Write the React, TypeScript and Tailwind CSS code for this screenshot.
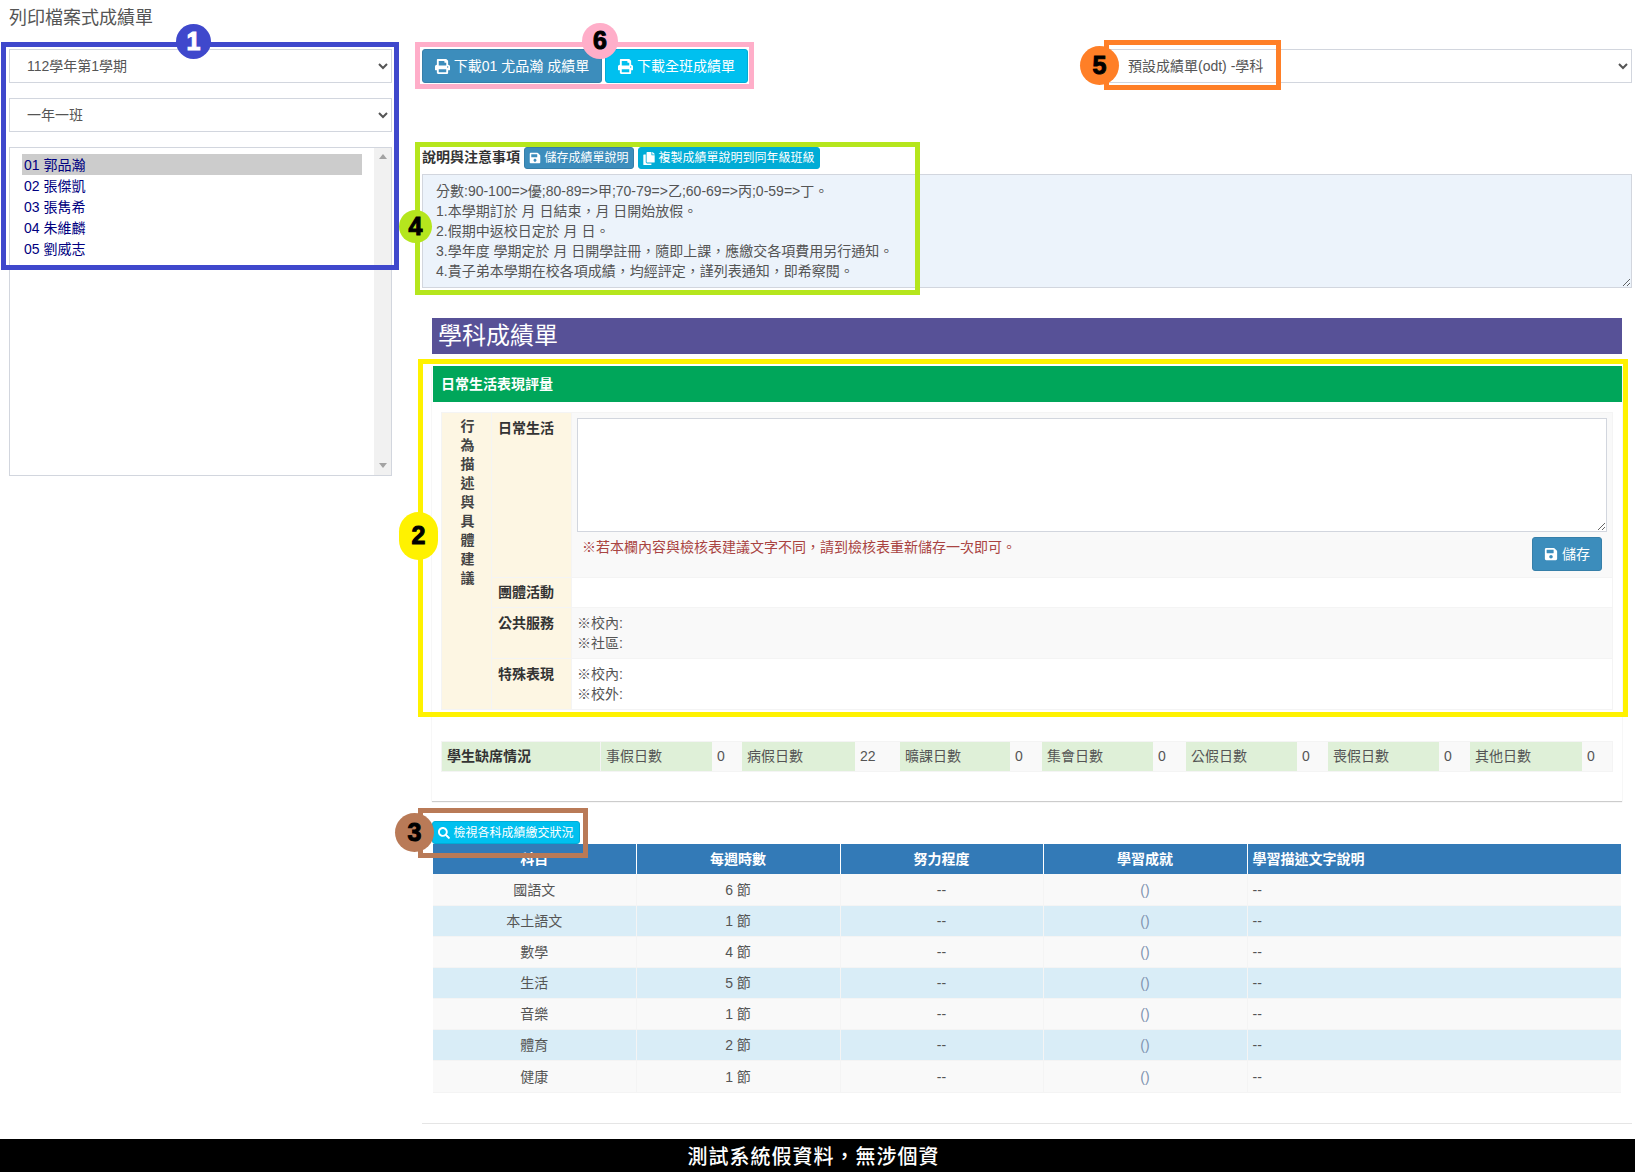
import React from 'react';
import { FaPrint, FaSave, FaCopy, FaSearch } from 'react-icons/fa';

const font = "font-['Liberation_Sans','Noto_Sans_CJK_TC',sans-serif]";

const students = ['01 郭品瀚', '02 張傑凱', '03 張雋希', '04 朱維麟', '05 劉威志'];

const notes = [
  '分數:90-100=>優;80-89=>甲;70-79=>乙;60-69=>丙;0-59=>丁。',
  '1.本學期訂於 月 日結束，月 日開始放假。',
  '2.假期中返校日定於 月 日。',
  '3.學年度 學期定於 月 日開學註冊，隨即上課，應繳交各項費用另行通知。',
  '4.貴子弟本學期在校各項成績，均經評定，謹列表通知，即希察閱。',
];

const absences = [
  ['事假日數', '0'],
  ['病假日數', '22'],
  ['曠課日數', '0'],
  ['集會日數', '0'],
  ['公假日數', '0'],
  ['喪假日數', '0'],
  ['其他日數', '0'],
];

const subjects = [
  ['國語文', '6 節'],
  ['本土語文', '1 節'],
  ['數學', '4 節'],
  ['生活', '5 節'],
  ['音樂', '1 節'],
  ['體育', '2 節'],
  ['健康', '1 節'],
];

const vertical = ['行', '為', '描', '述', '與', '具', '體', '建', '議'];

const Sel: React.FC<{ label: string; className?: string }> = ({ label, className }) => (
  <select className={`h-[34px] bg-white border border-[#d2d6de] text-[14px] text-[#555] ${className || ''}`}>
    <option>{label}</option>
  </select>
);

// 截圖上的標註框
const Mark: React.FC<{ className: string }> = ({ className }) => (
  <div className={`absolute border-[5px] pointer-events-none ${className}`} />
);

const Badge: React.FC<{ n: string; className: string }> = ({ n, className }) => (
  <div className={`absolute rounded-full flex items-center justify-center font-bold text-[25px] [-webkit-text-stroke:1px_currentColor] ${className}`}>{n}</div>
);

export default function App() {
  return (
    <div className={`${font} relative h-[1172px] overflow-hidden bg-white text-[14px] text-[#333]`}>
      <div className="flex">
        {/* 左欄 */}
        <div className="w-[422px] shrink-0 pl-[9px] pr-[30px]">
          <h1 className="text-[18px] leading-[20px] text-[#555] pt-[8px] pb-[21px]">列印檔案式成績單</h1>
          <Sel label="112學年第1學期" className="w-full block pl-[13px]" />
          <Sel label="一年一班" className="w-full block mt-[15px] pl-[13px]" />
          <div className="mt-[15px] h-[329px] border border-[#d2d6de] flex">
            <div className="flex-1 pl-[12px] pr-[12px] pt-[6px]">
              {students.map((s, i) => (
                <div
                  key={s}
                  className={`h-[21px] pt-px leading-[21px] pl-[2px] text-[14px] text-[#000080] ${i === 0 ? 'bg-[#cccccc]' : ''}`}
                >
                  {s}
                </div>
              ))}
            </div>
            <div className="w-[17px] bg-[#f1f1f1] flex flex-col justify-between items-center pt-[6px] pb-[7px]">
              <div className="w-0 h-0 border-x-[4px] border-x-transparent border-b-[5px] border-b-[#a3a3a3]" />
              <div className="w-0 h-0 border-x-[4px] border-x-transparent border-t-[5px] border-t-[#a3a3a3]" />
            </div>
          </div>
        </div>

        {/* 右欄 */}
        <div className="w-[1210px] shrink-0 pt-[49px]">
          <div className="flex items-start">
            <button className="h-[34px] w-[180px] rounded-[3px] bg-[#3c8dbc] border border-[#367fa9] text-white flex items-center justify-center gap-[4px]">
              <FaPrint className="w-[15px] h-[15px]" />
              下載01 尤品瀚 成績單
            </button>
            <button className="ml-[3px] h-[34px] w-[143px] rounded-[3px] bg-[#00c0ef] border border-[#00acd6] text-white flex items-center justify-center gap-[4px]">
              <FaPrint className="w-[15px] h-[15px]" />
              下載全班成績單
            </button>
            <Sel label="預設成績單(odt) -學科" className="ml-[360px] w-[524px] pl-[15px]" />
          </div>

          <div className="mt-[64px] h-[22px] flex items-center">
            <span className="font-bold text-[14px] w-[102px] whitespace-nowrap pb-[2px]">說明與注意事項</span>
            <button className="h-[22px] w-[110px] rounded-[3px] bg-[#3c8dbc] border border-[#367fa9] text-white text-[12px] flex items-center justify-center gap-[3px]">
              <FaSave className="w-[12px] h-[12px]" />
              儲存成績單說明
            </button>
            <button className="ml-[4px] h-[22px] w-[182px] rounded-[3px] bg-[#00acd6] border border-[#00acd6] text-white text-[12px] flex items-center justify-center gap-[3px]">
              <FaCopy className="w-[12px] h-[13px]" />
              複製成績單說明到同年級班級
            </button>
          </div>

          <div className="mt-[5px] h-[114px] bg-[#ecf3fb] border border-[#d2d6de] pl-[13px] pr-[12px] pt-[6px] text-[14px] leading-[20px] text-[#555] resize overflow-auto">
            {notes.map((n) => (
              <div key={n}>{n}</div>
            ))}
          </div>

          <div className="mx-[10px] mt-[30px]">
            <h2 className="h-[36px] bg-[#575197] text-white text-[24px] leading-[36px] pl-[6px]">學科成績單</h2>

            {/* 日常生活表現評量 */}
            <div className="mt-[12px] bg-white shadow-[0_1px_1px_rgba(0,0,0,0.2)] pb-[29px]">
              <div className="ml-px h-[36px] bg-[#00a65a] text-white font-bold text-[14px] leading-[36px] pl-[8px]">日常生活表現評量</div>
              <div className="px-[9px] pt-[10px]">
                <table className="w-full table-fixed border-collapse border border-[#f4f4f4]">
                  <colgroup>
                    <col className="w-[50px]" />
                    <col className="w-[80px]" />
                    <col />
                  </colgroup>
                  <tbody>
                    <tr className="h-[165px]">
                      <td rowSpan={4} className="bg-[#fdf6e3] align-top text-center font-bold border border-[#f4f4f4] pt-[4px] pl-[2px] leading-[19px] text-[#444]">
                        {vertical.map((c) => (
                          <div key={c}>{c}</div>
                        ))}
                      </td>
                      <td className="bg-[#fdf6e3] align-top font-bold pl-[6px] pt-[5px] border border-[#f4f4f4]">日常生活</td>
                      <td className="bg-[#f9f9f9] align-top px-[5px] pt-[5px] border border-[#f4f4f4]">
                        <textarea className="block w-full h-[114px] bg-white border border-[#d2d6de]" />
                        <div className="flex justify-between pr-[5px]">
                          <span className="text-[#a94442] pl-[5px] pt-[5px]">※若本欄內容與檢核表建議文字不同，請到檢核表重新儲存一次即可。</span>
                          <button className="mt-[5px] h-[34px] w-[70px] rounded-[3px] bg-[#3c8dbc] border border-[#367fa9] text-white flex items-center justify-center gap-[4px]">
                            <FaSave className="w-[14px] h-[14px]" />
                            儲存
                          </button>
                        </div>
                      </td>
                    </tr>
                    <tr className="h-[30px]">
                      <td className="bg-[#fdf6e3] font-bold pl-[6px] border border-[#f4f4f4]">團體活動</td>
                      <td className="bg-white border border-[#f4f4f4]" />
                    </tr>
                    <tr className="h-[51px]">
                      <td className="bg-[#fdf6e3] align-top font-bold pl-[6px] pt-[5px] border border-[#f4f4f4]">公共服務</td>
                      <td className="bg-[#f9f9f9] align-top pl-[5px] pt-[5px] leading-[20px] text-[#555] border border-[#f4f4f4]">
                        <div>※校內:</div>
                        <div>※社區:</div>
                      </td>
                    </tr>
                    <tr className="h-[51px]">
                      <td className="bg-[#fdf6e3] align-top font-bold pl-[6px] pt-[5px] border border-[#f4f4f4]">特殊表現</td>
                      <td className="bg-white align-top pl-[5px] pt-[5px] leading-[20px] text-[#555] border border-[#f4f4f4]">
                        <div>※校內:</div>
                        <div>※校外:</div>
                      </td>
                    </tr>
                  </tbody>
                </table>

                {/* 學生缺席情況 */}
                <div className="mt-[31px] h-[31px] grid grid-cols-[159px_111px_30px_113px_45px_110px_32px_111px_33px_111px_31px_111px_31px_112px_1fr] border border-[#f4f4f4] leading-[29px]">
                  <div className="bg-[#dff0d8] font-bold pl-[5px] border-r border-[#f4f4f4]">學生缺席情況</div>
                  {absences.map(([k, v]) => (
                    <React.Fragment key={k}>
                      <div className="bg-[#dff0d8] pl-[5px] text-[#555]">{k}</div>
                      <div className="bg-[#f9f9f9] pl-[5px] text-[#555]">{v}</div>
                    </React.Fragment>
                  ))}
                </div>
              </div>
            </div>

            {/* 各科成績 */}
            <div className="mt-[20px] h-[23px]">
              <button className="h-[23px] w-[148px] rounded-[3px] bg-[#00c0ef] border border-[#00acd6] text-white text-[12px] flex items-center justify-center gap-[3px]">
                <FaSearch className="w-[12px] h-[12px]" />
                檢視各科成績繳交狀況
              </button>
            </div>
            <table className="w-[1188px] ml-px table-fixed border-collapse">
              <colgroup>
                <col className="w-[203px]" />
                <col className="w-[204px]" />
                <col className="w-[203px]" />
                <col className="w-[204px]" />
                <col />
              </colgroup>
              <thead>
                <tr className="h-[30px] bg-[#337ab7] text-white font-bold">
                  <th className="border-r border-white">科目</th>
                  <th className="border-r border-white">每週時數</th>
                  <th className="border-r border-white">努力程度</th>
                  <th className="border-r border-white">學習成就</th>
                  <th className="text-left pl-[5px]">學習描述文字說明</th>
                </tr>
              </thead>
              <tbody>
                {subjects.map(([name, hours], i) => (
                  <tr key={name} className={`text-[#555] border-b border-[#f4f4f4] ${i === 6 ? 'h-[32px]' : 'h-[31px]'} ${i % 2 === 0 ? 'bg-[#f9f9f9]' : 'bg-[#d9edf7]'}`}>
                    <td className="pt-[2px] text-center border-r border-[#f4f4f4]">{name}</td>
                    <td className="pt-[2px] text-center border-r border-[#f4f4f4]">{hours}</td>
                    <td className="pt-[2px] text-center border-r border-[#f4f4f4]">--</td>
                    <td className="pt-[2px] text-center border-r border-[#f4f4f4] text-[#7f93b0]">()</td>
                    <td className="pt-[2px] pl-[5px]">--</td>
                  </tr>
                ))}
              </tbody>
            </table>
          </div>
          <div className="mt-[30px] h-px bg-[#e5e5e5]" />
        </div>
      </div>

      {/* 頁尾 */}
      <div className="absolute left-0 right-0 bottom-0 h-[33px] bg-black text-white font-medium text-[20px] leading-[37px] tracking-[1px] text-center pr-[8px]">
        測試系統假資料，無涉個資
      </div>

      {/* 標註 */}
      <Mark className="left-[1px] top-[42px] w-[398px] h-[228px] border-[#3f48cc]" />
      <Mark className="left-[415px] top-[42px] w-[339px] h-[47px] border-[#ffaec9]" />
      <Mark className="left-[1104px] top-[40px] w-[177px] h-[50px] border-[#ff7f27]" />
      <Mark className="left-[415px] top-[142px] w-[505px] h-[153px] border-[#b5e61d]" />
      <Mark className="left-[418px] top-[359px] w-[1210px] h-[358px] border-[#fff200]" />
      <Mark className="left-[418px] top-[808px] w-[170px] h-[50px] border-[#b97a57]" />
      <Badge n="1" className="left-[176px] top-[24px] w-[35px] h-[35px] bg-[#3f48cc] text-white" />
      <Badge n="2" className="left-[399px] top-[512px] w-[39px] h-[48px] bg-[#fff200] text-black" />
      <Badge n="3" className="left-[395px] top-[813px] w-[39px] h-[39px] bg-[#b97a57] text-black" />
      <Badge n="4" className="left-[399px] top-[210px] w-[33px] h-[33px] bg-[#b5e61d] text-black" />
      <Badge n="5" className="left-[1080px] top-[46px] w-[39px] h-[39px] bg-[#ff7f27] text-black" />
      <Badge n="6" className="left-[582px] top-[23px] w-[36px] h-[36px] bg-[#ffaec9] text-black" />
    </div>
  );
}
